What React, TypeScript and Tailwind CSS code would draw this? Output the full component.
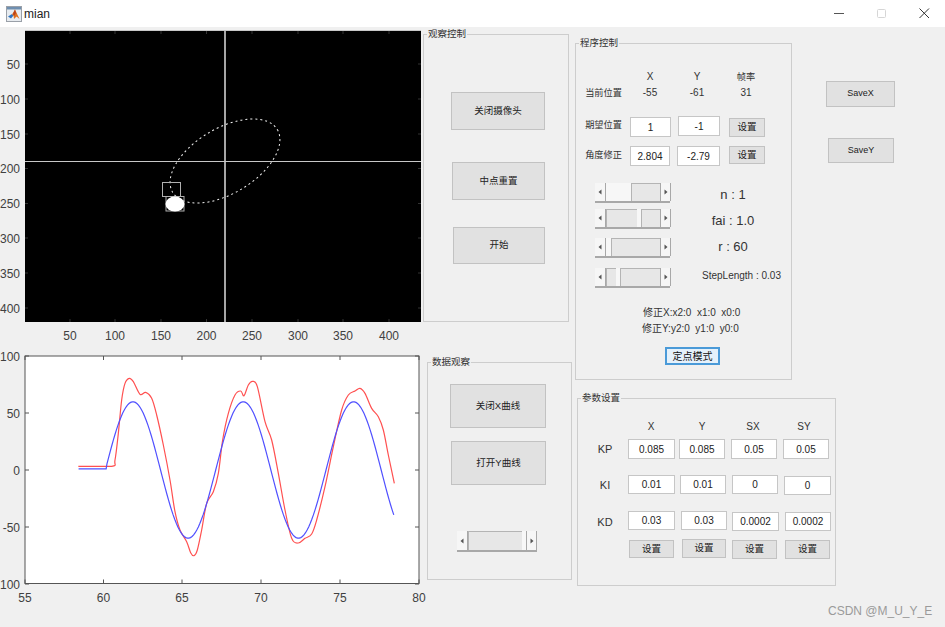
import React from "react";

const FONT = "[font-family:'Liberation_Sans','Noto_Sans_CJK_SC',sans-serif]";

const redPts: [number, number][] = [
  [235,379],[335,379],[345,360],[355,280],[365,180],[375,130],[388,115],[400,125],[420,163],[437,157],[455,175],[470,225],[490,315],[510,420],[525,515],[540,570],[560,605],[572,638],[582,647],[592,630],[605,570],[620,490],[640,455],[655,400],[668,300],[685,220],[705,165],[722,153],[732,167],[745,135],[758,124],[772,140],[795,245],[815,300],[835,400],[855,510],[875,595],[895,609],[915,595],[935,582],[950,540],[975,440],[1000,320],[1025,210],[1045,165],[1065,153],[1080,145],[1095,160],[1115,205],[1135,230],[1150,270],[1165,345],[1183,430],
];

function smoothPath(zoomPts: [number, number][]) {
  const p = zoomPts.map(([x, y]) => [x / 3, 340 + y / 3]);
  let d = `M${p[0][0]} ${p[0][1]}`;
  for (let i = 0; i < p.length - 1; i++) {
    const a = p[Math.max(0, i - 1)], b = p[i], c = p[i + 1], e = p[Math.min(p.length - 1, i + 2)];
    const k = i === 0 ? 0 : 1 / 6;
    d += ` C${b[0] + (c[0] - a[0]) * k} ${b[1] + (c[1] - a[1]) * k} ${c[0] - (e[0] - b[0]) * k} ${c[1] - (e[1] - b[1]) * k} ${c[0]} ${c[1]}`;
  }
  return d;
}

const X = (t: number) => 25 + (t - 55) * 15.76;
const Y = (v: number) => 470 - v * 1.137;

function bluePath() {
  let d = `M${X(58.4)} ${Y(1)} L${X(60.15)} ${Y(1)}`;
  for (let t = 60.2; t <= 78.45; t += 0.1) {
    d += ` L${X(t).toFixed(2)} ${Y(60 * Math.sin((2 * Math.PI * (t - 60.1)) / 7)).toFixed(2)}`;
  }
  return d;
}

function CameraChart() {
  const ys = [[50, 64], [100, 99], [150, 134], [200, 168.5], [250, 203.5], [300, 238], [350, 273], [400, 308]];
  const xs = [[50, 70], [100, 115], [150, 161], [200, 206.5], [250, 252], [300, 298], [350, 343], [400, 389]];
  return (
    <svg width="423" height="318" viewBox="0 27 423 318" className="block shrink-0">
      <rect x="25" y="30" width="396" height="292" fill="#000" />
      <path d="M25 30.5H421" stroke="#c8c8c8" strokeWidth="1" />
      {ys.map(([l, y]) => (
        <g key={l}>
          <path d={`M25 ${y}h3M421 ${y}h-3`} stroke="#333" />
          <text x="20" y={y + 4.5} textAnchor="end" fontSize="12" fill="#404040" fontFamily="Liberation Sans">{l}</text>
        </g>
      ))}
      {xs.map(([l, x]) => (
        <g key={l}>
          <path d={`M${x} 31v3M${x} 322v-3`} stroke="#333" />
          <text x={x} y="340" textAnchor="middle" fontSize="12" fill="#404040" fontFamily="Liberation Sans">{l}</text>
        </g>
      ))}
      <path d="M225 31V322" stroke="#a6a6a6" strokeWidth="2" />
      <path d="M25 161.5H421" stroke="#c8c8c8" strokeWidth="1" />
      <ellipse cx="225" cy="161" rx="61" ry="32.6" transform="rotate(-31 225 161)" fill="none" stroke="#f2f2f2" strokeWidth="1" strokeDasharray="2 3" />
      <rect x="162.5" y="182.5" width="18" height="14" fill="none" stroke="#b0b0b0" />
      <rect x="166" y="196.5" width="18" height="14.5" fill="none" stroke="#b0b0b0" />
      <ellipse cx="175" cy="204" rx="9.5" ry="7.5" fill="#fff" />
    </svg>
  );
}

function CurveChart() {
  const ys: [string, number][] = [["100", 356], ["50", 413], ["0", 470], ["-50", 527], ["-100", 584]];
  const xs: [string, number][] = [["55", 25], ["60", 103.5], ["65", 182], ["70", 261], ["75", 340], ["80", 419]];
  return (
    <svg width="423" height="255" viewBox="0 345 423 255" className="block shrink-0 overflow-visible">
      <rect x="25" y="356" width="394" height="227.5" fill="#fff" stroke="#555" strokeWidth="1" />
      {ys.map(([l, y]) => (
        <g key={l}>
          <path d={`M25 ${y}h4M419 ${y}h-4`} stroke="#555" />
          <text x="20" y={y + 4.5} textAnchor="end" fontSize="12" fill="#404040" fontFamily="Liberation Sans">{l}</text>
        </g>
      ))}
      {xs.map(([l, x]) => (
        <g key={l}>
          <path d={`M${x} 356v4M${x} 583.5v-4`} stroke="#555" />
          <text x={x} y="602" textAnchor="middle" fontSize="12" fill="#404040" fontFamily="Liberation Sans">{l}</text>
        </g>
      ))}
      <path d={smoothPath(redPts)} fill="none" stroke="#ff5050" strokeWidth="1.2" />
      <path d={bluePath()} fill="none" stroke="#5050ff" strokeWidth="1.2" />
    </svg>
  );
}

function Panel({ title, className, children }: { title: string; className: string; children?: React.ReactNode }) {
  return (
    <div className={`relative shrink-0 border border-[#cdcdcd] ${className}`}>
      <span className="absolute left-[3px] top-[-7px] whitespace-nowrap bg-[#f0f0f0] px-[1px] text-[9.5px] leading-[12px] text-[#333]">{title}</span>
      {children}
    </div>
  );
}

function Btn({ className, small, children }: { className: string; small?: boolean; children: React.ReactNode }) {
  return (
    <div className={`flex shrink-0 items-center justify-center whitespace-nowrap border border-[#c2c2c2] bg-[#e1e1e1] text-[#222] ${small ? "text-[9px]" : "text-[9.5px]"} ${className}`}>
      {children}
    </div>
  );
}

function Field({ className, children }: { className: string; children: React.ReactNode }) {
  return (
    <div className={`flex shrink-0 items-center justify-center border border-[#c6c6c6] bg-white text-[10px] text-[#222] ${className}`}>
      {children}
    </div>
  );
}

function Arrow({ dir }: { dir: "l" | "r" }) {
  return (
    <div className={`flex w-[11px] shrink-0 items-center justify-center border-[#a8a8a8] bg-[#f6f6f6] ${dir === "l" ? "border-r" : "border-l border-r"}`}>
      <svg width="4" height="6" viewBox="0 0 4 6">
        <path d={dir === "l" ? "M3.5 0.5V5.5L0.5 3Z" : "M0.5 0.5V5.5L3.5 3Z"} fill="#555" />
      </svg>
    </div>
  );
}

function Gap({ className }: { className: string }) {
  return <div className={`h-full shrink-0 bg-[#f7f7f7] ${className}`} />;
}

function Thumb({ className }: { className: string }) {
  return <div className={`h-full shrink-0 border-l border-t border-[#b4b4b4] bg-[#e7e7e7] ${className}`} />;
}

function Scroll({ className, children }: { className: string; children: React.ReactNode }) {
  return (
    <div className={`flex shrink-0 border-b-2 border-[#a8a8a8] ${className}`}>
      <Arrow dir="l" />
      {children}
      <Arrow dir="r" />
    </div>
  );
}

function Cell({ className, children }: { className: string; children: React.ReactNode }) {
  return <div className={`shrink-0 whitespace-nowrap text-center text-[10px] leading-[12px] text-[#333] ${className}`}>{children}</div>;
}

function CnCell({ className, children }: { className: string; children: React.ReactNode }) {
  return <div className={`shrink-0 whitespace-nowrap text-center text-[9.2px] leading-[12px] text-[#333] ${className}`}>{children}</div>;
}

function KCell({ className, children }: { className: string; children: React.ReactNode }) {
  return <div className={`shrink-0 whitespace-nowrap text-center text-[11px] leading-[12px] text-[#333] ${className}`}>{children}</div>;
}

function MatlabIcon() {
  return (
    <svg width="16" height="16" viewBox="0 0 16 16" className="shrink-0">
      <rect x="0.5" y="0.5" width="15" height="15" fill="#e8ecf0" stroke="#9aa0a8" />
      <rect x="1" y="1" width="14" height="2.5" fill="#6f8fb0" />
      <path d="M2 10.5L6 8L7.5 9.5L5 12.5Z" fill="#2f74c0" />
      <path d="M6 8.5L9 3.5L13.5 13L10.5 10.5L8 13L7.5 9.5Z" fill="#e0701e" />
      <path d="M9 3.5L7 8L8 10L10 7Z" fill="#b8421a" />
    </svg>
  );
}

export default function App() {
  return (
    <div className={`relative flex h-[627px] w-[945px] flex-col overflow-hidden bg-[#f0f0f0] ${FONT}`}>
      <div className="flex h-[27px] shrink-0 items-center bg-white pl-[6px]">
        <MatlabIcon />
        <span className="ml-[2px] text-[12px] text-[#222]">mian</span>
        <svg width="111" height="27" viewBox="0 0 111 27" className="ml-auto shrink-0">
          <path d="M0 13.5H10" stroke="#555" strokeWidth="1" />
          <rect x="43.5" y="9.5" width="8" height="8" rx="1" fill="none" stroke="#d6d6d6" />
          <path d="M85.5 8.5L95 18M95 8.5L85.5 18" stroke="#333" strokeWidth="1" />
        </svg>
      </div>

      <div className="flex flex-1">
        <div className="flex w-[423px] shrink-0 flex-col">
          <CameraChart />
          <CurveChart />
        </div>

        <div className="flex w-[152px] shrink-0 flex-col items-start pt-[7px]">
          <Panel title="观察控制" className="flex h-[288px] w-[146px] flex-col items-start">
            <Btn className="ml-[27px] mt-[57px] h-[38px] w-[94px]">关闭摄像头</Btn>
            <Btn className="ml-[28px] mt-[32px] h-[38px] w-[93px]">中点重置</Btn>
            <Btn className="ml-[29px] mt-[27px] h-[37px] w-[92px]">开始</Btn>
          </Panel>
          <Panel title="数据观察" className="ml-[4px] mt-[40px] flex h-[218px] w-[145px] flex-col items-start">
            <Btn className="ml-[22px] mt-[21px] h-[44px] w-[96px]">关闭X曲线</Btn>
            <Btn className="ml-[23px] mt-[13px] h-[44px] w-[95px]">打开Y曲线</Btn>
            <Scroll className="ml-[29px] mt-[46px] h-[21px] w-[80px]">
              <Thumb className="w-[54px]" />
              <Gap className="w-[4px]" />
            </Scroll>
          </Panel>
        </div>

        <div className="flex flex-col items-start">
          <div className="flex items-start">
            <Panel title="程序控制" className="mt-[16px] flex h-[337px] w-[217px] flex-col items-start">
              <div className="mt-[27px] flex">
                <Cell className="ml-[54px] w-[40px]">X</Cell>
                <Cell className="ml-[7px] w-[40px]">Y</Cell>
                <CnCell className="ml-[9px] w-[40px]">帧率</CnCell>
              </div>
              <div className="mt-[4px] flex">
                <CnCell className="ml-[9px] w-[37px]">当前位置</CnCell>
                <Cell className="ml-[8px] w-[40px]">-55</Cell>
                <Cell className="ml-[7px] w-[40px]">-61</Cell>
                <Cell className="ml-[9px] w-[40px]">31</Cell>
              </div>
              <div className="mt-[17px] flex items-start">
                <CnCell className="ml-[9px] mt-[3px] w-[37px]">期望位置</CnCell>
                <Field className="ml-[8px] mt-[1px] h-[20px] w-[41px]">1</Field>
                <Field className="ml-[7px] h-[20px] w-[42px]">-1</Field>
                <Btn className="ml-[9px] mt-[2px] h-[19px] w-[36px]">设置</Btn>
              </div>
              <div className="mt-[9px] flex items-start">
                <CnCell className="ml-[9px] mt-[3px] w-[37px]">角度修正</CnCell>
                <Field className="ml-[8px] h-[20px] w-[40px]">2.804</Field>
                <Field className="ml-[7px] h-[20px] w-[43px]">-2.79</Field>
                <Btn className="ml-[9px] h-[18px] w-[36px]">设置</Btn>
              </div>
              <div className="ml-[19px] mt-[17px] flex h-[20px] items-start">
                <Scroll className="h-[20px] w-[75px]">
                  <Gap className="w-[25px]" />
                  <Thumb className="w-[29px]" />
                </Scroll>
                <div className="ml-[19px] mt-[2px] w-[88px] whitespace-nowrap text-center text-[13px] leading-[20px] text-[#333]">n : 1</div>
              </div>
              <div className="ml-[19px] mt-[6px] flex h-[20px] items-start">
                <Scroll className="h-[20px] w-[75px]">
                  <Thumb className="w-[31px]" />
                  <Gap className="w-[4px]" />
                  <Thumb className="w-[19px]" />
                </Scroll>
                <div className="ml-[19px] mt-[2px] w-[88px] whitespace-nowrap text-center text-[13px] leading-[20px] text-[#333]">fai : 1.0</div>
              </div>
              <div className="ml-[19px] mt-[9px] flex h-[20px] items-start">
                <Scroll className="h-[20px] w-[75px]">
                  <Gap className="w-[5px]" />
                  <Thumb className="w-[49px]" />
                </Scroll>
                <div className="ml-[19px] mt-[-1px] w-[88px] whitespace-nowrap text-center text-[13px] leading-[20px] text-[#333]">r : 60</div>
              </div>
              <div className="ml-[19px] mt-[10px] flex h-[20px] items-start">
                <Scroll className="h-[20px] w-[75px]">
                  <Thumb className="w-[10px]" />
                  <Gap className="w-[4px]" />
                  <Thumb className="w-[40px]" />
                </Scroll>
                <div className="ml-[32px] mt-[-2px] whitespace-nowrap text-[10px] leading-[20px] text-[#333]">StepLength : 0.03</div>
              </div>
              <div className="ml-[67px] mt-[17px] whitespace-pre text-[10px] leading-[16px] text-[#333]">修正X:x2:0  x1:0  x0:0</div>
              <div className="ml-[66px] whitespace-pre text-[10px] leading-[16px] text-[#333]">修正Y:y2:0  y1:0  y0:0</div>
              <div className="ml-[89px] mt-[10px] flex h-[18px] w-[55px] items-center justify-center whitespace-nowrap border-2 border-[#4a9ad8] bg-[#e5f1fb] text-[10px] text-[#111]">定点模式</div>
            </Panel>
            <div className="ml-[34px] mt-[54px] flex flex-col items-start">
              <Btn small className="h-[26px] w-[69px]">SaveX</Btn>
              <Btn small className="ml-[2px] mt-[31px] h-[25px] w-[66px]">SaveY</Btn>
            </div>
          </div>

          <Panel title="参数设置" className="ml-[2px] mt-[18px] flex h-[188px] w-[259px] flex-col items-start">
            <div className="mt-[22px] flex">
              <Cell className="ml-[53px] w-[40px]">X</Cell>
              <Cell className="ml-[11px] w-[40px]">Y</Cell>
              <Cell className="ml-[11px] w-[40px]">SX</Cell>
              <Cell className="ml-[11px] w-[40px]">SY</Cell>
            </div>
            <div className="mt-[6px] flex items-start">
              <KCell className="ml-[12px] mt-[4px] w-[30px]">KP</KCell>
              <Field className="ml-[8px] h-[20px] w-[47px]">0.085</Field>
              <Field className="ml-[4px] h-[20px] w-[46px]">0.085</Field>
              <Field className="ml-[6px] h-[20px] w-[46px]">0.05</Field>
              <Field className="ml-[6px] h-[20px] w-[46px]">0.05</Field>
            </div>
            <div className="mt-[16px] flex items-start">
              <KCell className="ml-[12px] mt-[4px] w-[30px]">KI</KCell>
              <Field className="ml-[8px] h-[19px] w-[47px]">0.01</Field>
              <Field className="ml-[5px] h-[19px] w-[46px]">0.01</Field>
              <Field className="ml-[6px] h-[19px] w-[46px]">0</Field>
              <Field className="ml-[6px] mt-[1px] h-[19px] w-[47px]">0</Field>
            </div>
            <div className="mt-[16px] flex items-start">
              <KCell className="ml-[12px] mt-[5px] w-[30px]">KD</KCell>
              <Field className="ml-[8px] h-[19px] w-[47px]">0.03</Field>
              <Field className="ml-[6px] h-[19px] w-[46px]">0.03</Field>
              <Field className="ml-[5px] mt-[1px] h-[19px] w-[47px]">0.0002</Field>
              <Field className="ml-[6px] mt-[1px] h-[19px] w-[46px]">0.0002</Field>
            </div>
            <div className="mt-[8px] flex items-start">
              <Btn className="ml-[51px] mt-[1px] h-[18px] w-[45px]">设置</Btn>
              <Btn className="ml-[8px] h-[19px] w-[44px]">设置</Btn>
              <Btn className="ml-[6px] mt-[1px] h-[19px] w-[45px]">设置</Btn>
              <Btn className="ml-[8px] mt-[1px] h-[19px] w-[45px]">设置</Btn>
            </div>
          </Panel>
        </div>
      </div>

      <span className="absolute left-[828px] top-[604px] whitespace-nowrap text-[12px] leading-[14px] text-[#9a9a9a]">CSDN @M_U_Y_E</span>
    </div>
  );
}
